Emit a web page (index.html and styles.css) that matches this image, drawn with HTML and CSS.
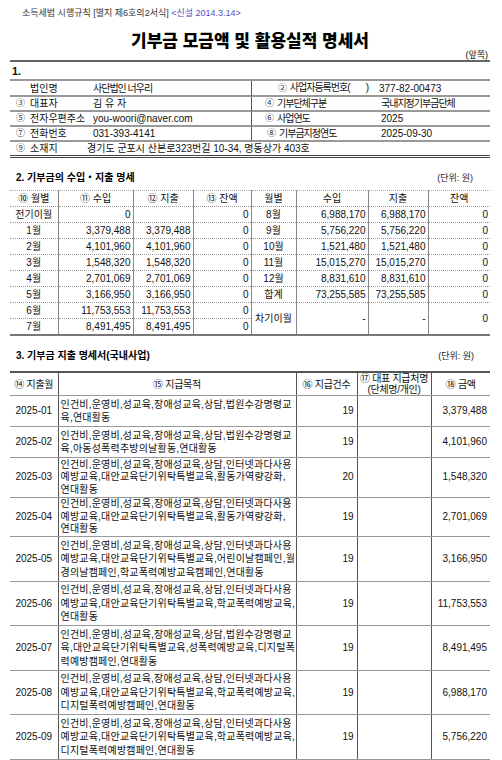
FILE: index.html
```html
<!DOCTYPE html>
<html lang="ko">

<head>
    <meta charset="UTF-8">
    <meta name="viewport" content="width=device-width, initial-scale=1.0">
    <title>기부금 모금액 및 활용실적 명세서</title>
    <link rel="stylesheet" href="styles.css">
</head>

<body>
    <div class="page">
        <p class="form-ref">소득세법 시행규칙 [별지 제6호의2서식] <span class="revised">&lt;신설 2014.3.14&gt;</span></p>
        <h1>기부금 모금액 및 활용실적 명세서</h1>
        <p class="side-note">(앞쪽)</p>

        <!-- 1. 기본사항 -->
        <div class="section-one">
            <div class="sec-no">1.</div>
            <table class="info-table">
                <colgroup>
                    <col style="width:18px">
                    <col style="width:59px">
                    <col style="width:164px">
                    <col style="width:26px">
                    <col style="width:98px">
                    <col style="width:115px">
                </colgroup>
                <tr>
                    <td class="no"></td>
                    <td>법인명</td>
                    <td class="value kr">사단법인 너우리</td>
                    <td class="no mid"></td>
                    <td class="label reg">
                        <div class="split"><span><span class="circ">②</span> <span class="kr">사업자등록번호(</span></span><span>)</span></div>
                    </td>
                    <td class="value shift">377-82-00473</td>
                </tr>
                <tr>
                    <td class="no">③</td>
                    <td>대표자</td>
                    <td class="value">김 유 자</td>
                    <td class="no mid">④</td>
                    <td class="label kr">기부단체구분</td>
                    <td class="value kr">국내지정기부금단체</td>
                </tr>
                <tr>
                    <td class="no">⑤</td>
                    <td>전자우편주소</td>
                    <td class="value">you-woori@naver.com</td>
                    <td class="no mid">⑥</td>
                    <td class="label kr">사업연도</td>
                    <td class="value">2025</td>
                </tr>
                <tr>
                    <td class="no">⑦</td>
                    <td>전화번호</td>
                    <td class="value">031-393-4141</td>
                    <td class="no mid nudge">⑧</td>
                    <td class="label kr nudge">기부금지정연도</td>
                    <td class="value">2025-09-30</td>
                </tr>
                <tr class="last">
                    <td class="no">⑨</td>
                    <td>소재지</td>
                    <td class="value addr" colspan="4">경기도 군포시 산본로323번길 10-34, 명동상가 403호</td>
                </tr>
            </table>
        </div>

        <!-- 2. 수입·지출 -->
        <div class="sec-head">
            <h2>2. 기부금의 수입・지출 명세</h2>
            <span class="unit">(단위: 원)</span>
        </div>
        <table class="flow-table">
            <colgroup>
                <col style="width:48px">
                <col style="width:75px">
                <col style="width:60px">
                <col style="width:58px">
                <col style="width:45px">
                <col style="width:72px">
                <col style="width:60px">
                <col style="width:62px">
            </colgroup>
            <thead>
                <tr>
                    <th>⑩ 월별</th>
                    <th>⑪ 수입</th>
                    <th>⑫ 지출</th>
                    <th>⑬ 잔액</th>
                    <th>월별</th>
                    <th>수입</th>
                    <th>지출</th>
                    <th>잔액</th>
                </tr>
            </thead>
            <tbody>
                <tr>
                    <td class="month">전기이월</td>
                    <td>0</td>
                    <td></td>
                    <td>0</td>
                    <td class="month">8월</td>
                    <td>6,988,170</td>
                    <td>6,988,170</td>
                    <td>0</td>
                </tr>
                <tr>
                    <td class="month">1월</td>
                    <td>3,379,488</td>
                    <td>3,379,488</td>
                    <td>0</td>
                    <td class="month">9월</td>
                    <td>5,756,220</td>
                    <td>5,756,220</td>
                    <td>0</td>
                </tr>
                <tr>
                    <td class="month">2월</td>
                    <td>4,101,960</td>
                    <td>4,101,960</td>
                    <td>0</td>
                    <td class="month">10월</td>
                    <td>1,521,480</td>
                    <td>1,521,480</td>
                    <td>0</td>
                </tr>
                <tr>
                    <td class="month">3월</td>
                    <td>1,548,320</td>
                    <td>1,548,320</td>
                    <td>0</td>
                    <td class="month">11월</td>
                    <td>15,015,270</td>
                    <td>15,015,270</td>
                    <td>0</td>
                </tr>
                <tr>
                    <td class="month">4월</td>
                    <td>2,701,069</td>
                    <td>2,701,069</td>
                    <td>0</td>
                    <td class="month">12월</td>
                    <td>8,831,610</td>
                    <td>8,831,610</td>
                    <td>0</td>
                </tr>
                <tr>
                    <td class="month">5월</td>
                    <td>3,166,950</td>
                    <td>3,166,950</td>
                    <td>0</td>
                    <td class="month">합계</td>
                    <td>73,255,585</td>
                    <td>73,255,585</td>
                    <td>0</td>
                </tr>
                <tr>
                    <td class="month">6월</td>
                    <td>11,753,553</td>
                    <td>11,753,553</td>
                    <td>0</td>
                    <td class="month" rowspan="2">차기이월</td>
                    <td rowspan="2">-</td>
                    <td rowspan="2">-</td>
                    <td rowspan="2">0</td>
                </tr>
                <tr>
                    <td class="month">7월</td>
                    <td>8,491,495</td>
                    <td>8,491,495</td>
                    <td>0</td>
                </tr>
            </tbody>
        </table>

        <!-- 3. 지출 명세 -->
        <div class="sec-head sec-three">
            <h2>3. 기부금 지출 명세서(국내사업)</h2>
            <span class="unit unit-wide">(단위: 원)</span>
        </div>
        <table class="spend-table">
            <colgroup>
                <col style="width:48px">
                <col style="width:238px">
                <col style="width:61px">
                <col style="width:74px">
                <col style="width:59px">
            </colgroup>
            <thead>
                <tr>
                    <th>⑭ 지출월</th>
                    <th>⑮ 지급목적</th>
                    <th>⑯ 지급건수</th>
                    <th>⑰ 대표 지급처명<br>(단체명/개인)</th>
                    <th>⑱ 금액</th>
                </tr>
            </thead>
            <tbody>
                <tr>
                    <td class="month">2025-01</td>
                    <td class="purpose">인건비,운영비,성교육,장애성교육,상담,법원수강명령교<br>육,연대활동</td>
                    <td class="num">19</td>
                    <td></td>
                    <td class="num">3,379,488</td>
                </tr>
                <tr>
                    <td class="month">2025-02</td>
                    <td class="purpose">인건비,운영비,성교육,장애성교육,상담,법원수강명령교<br>육,아동성폭력추방의날활동,연대활동</td>
                    <td class="num">19</td>
                    <td></td>
                    <td class="num">4,101,960</td>
                </tr>
                <tr class="tight">
                    <td class="month">2025-03</td>
                    <td class="purpose">인건비,운영비,성교육,장애성교육,상담,인터넷과다사용<br>예방교육,대안교육단기위탁특별교육,활동가역량강화,<br>연대활동</td>
                    <td class="num">20</td>
                    <td></td>
                    <td class="num">1,548,320</td>
                </tr>
                <tr class="tight">
                    <td class="month">2025-04</td>
                    <td class="purpose">인건비,운영비,성교육,장애성교육,상담,인터넷과다사용<br>예방교육,대안교육단기위탁특별교육,활동가역량강화,<br>연대활동</td>
                    <td class="num">19</td>
                    <td></td>
                    <td class="num">2,701,069</td>
                </tr>
                <tr>
                    <td class="month">2025-05</td>
                    <td class="purpose">인건비,운영비,성교육,장애성교육,상담,인터넷과다사용<br>예방교육,대안교육단기위탁특별교육,어린이날캠페인,월<br>경의날캠페인,학교폭력예방교육캠페인,연대활동</td>
                    <td class="num">19</td>
                    <td></td>
                    <td class="num">3,166,950</td>
                </tr>
                <tr>
                    <td class="month">2025-06</td>
                    <td class="purpose">인건비,운영비,성교육,장애성교육,상담,인터넷과다사용<br>예방교육,대안교육단기위탁특별교육,학교폭력예방교육,<br>연대활동</td>
                    <td class="num">19</td>
                    <td></td>
                    <td class="num">11,753,553</td>
                </tr>
                <tr>
                    <td class="month">2025-07</td>
                    <td class="purpose">인건비,운영비,성교육,장애성교육,상담,법원수강명령교<br>육,대안교육단기위탁특별교육,성폭력예방교육,디지털폭<br>력예방캠페인,연대활동</td>
                    <td class="num">19</td>
                    <td></td>
                    <td class="num">8,491,495</td>
                </tr>
                <tr>
                    <td class="month">2025-08</td>
                    <td class="purpose">인건비,운영비,성교육,장애성교육,상담,인터넷과다사용<br>예방교육,대안교육단기위탁특별교육,학교폭력예방교육,<br>디지털폭력예방캠페인,연대활동</td>
                    <td class="num">19</td>
                    <td></td>
                    <td class="num">6,988,170</td>
                </tr>
                <tr>
                    <td class="month">2025-09</td>
                    <td class="purpose">인건비,운영비,성교육,장애성교육,상담,인터넷과다사용<br>예방교육,대안교육단기위탁특별교육,학교폭력예방교육,<br>디지털폭력예방캠페인,연대활동</td>
                    <td class="num">19</td>
                    <td></td>
                    <td class="num">5,756,220</td>
                </tr>
            </tbody>
        </table>
    </div>
</body>

</html>
```

FILE: styles.css
```css
body {
    margin: 0;
    font-family: "Liberation Sans", "Noto Sans CJK KR", sans-serif;
    font-size: 10px;
    color: #111;
    background: #fff;
}

.page {
    width: 480px;
    padding: 0 12px 0 10px;
}

.form-ref {
    margin: 0;
    padding: 8px 0 0 12px;
    font-size: 9px;
    line-height: 11px;
    color: #333;
}

.revised {
    color: #5b4bc4;
}

h1 {
    margin: 11px 0 0;
    font-family: "Noto Sans CJK KR", sans-serif;
    font-size: 17px;
    line-height: 20px;
    font-weight: 900;
    text-align: center;
    color: #000;
}

.side-note {
    margin: 0;
    padding-right: 2px;
    font-size: 9px;
    line-height: 10px;
    text-align: right;
}

/* section 1 */
.section-one {
    border-top: 2px solid #666;
}

.sec-no {
    height: 17px;
    line-height: 18px;
    padding-left: 2px;
    font-size: 11px;
    font-weight: bold;
}

.info-table {
    width: 100%;
    table-layout: fixed;
    border-collapse: separate;
    border-spacing: 0;
    border-top: 2px solid #999;
}

.info-table td {
    padding: 0 0 0 6px;
    line-height: 13px;
    border-bottom: 2px solid #999;
    white-space: nowrap;
    overflow: hidden;
}

.info-table .last td {
    border-bottom: 3px double #444;
}

.info-table td.no {
    padding-left: 6px;
    font-size: 9px;
    color: #333;
}

.circ {
    font-size: 9px;
    color: #333;
}

.info-table td:nth-child(2) {
    padding-left: 2px;
}

.info-table td.mid {
    padding-left: 13px;
    border-left: 1px solid #555;
}

.info-table td.label {
    padding-left: 0;
}

.info-table td.label.reg {
    padding-left: 1px;
}

.info-table td.value {
    padding-left: 6px;
}

.info-table td.value.shift {
    padding-left: 4px;
}

.info-table td.nudge {
    padding-left: 2px;
}

.info-table td.mid.nudge {
    padding-left: 15px;
}

.info-table td.value.addr {
    padding-left: 0;
}

.kr {
    letter-spacing: -1px;
}

.split {
    display: flex;
    justify-content: space-between;
    padding-right: 6px;
}

/* section headers */
.sec-head {
    display: flex;
    justify-content: space-between;
    align-items: center;
    padding-top: 13px;
    margin-bottom: 5px;
    line-height: 14px;
}

.sec-head h2 {
    margin: 0;
    padding-left: 6px;
    font-size: 10px;
    font-weight: bold;
    color: #000;
}

.unit {
    padding-right: 17px;
    font-size: 9px;
    color: #222;
}

.sec-three {
    margin-bottom: 8px;
}

.unit-wide {
    padding-right: 16px;
}

/* section 2 */
.flow-table {
    width: 100%;
    table-layout: fixed;
    border-collapse: collapse;
    border-top: 1px dotted #aaa;
    border-bottom: 2px solid #777;
}

.flow-table th,
.flow-table td {
    padding: 0 2px;
    line-height: 15px;
    border-bottom: 1px dotted #999;
    border-left: 1px solid #888;
    text-align: right;
    white-space: nowrap;
}

.flow-table th {
    font-weight: normal;
    text-align: center;
}

.flow-table th:first-child,
.flow-table tr td:first-child {
    border-left: none;
}

.flow-table td.month {
    text-align: center;
}

/* section 3 */
.spend-table {
    width: 100%;
    table-layout: fixed;
    border-collapse: collapse;
    border-top: 2px solid #555;
}

.spend-table th,
.spend-table td {
    padding: 1.5px 3px;
    line-height: 13.5px;
    border-bottom: 1px solid #999;
    border-left: 1px solid #555;
    vertical-align: middle;
}

.spend-table th:first-child,
.spend-table td:first-child {
    border-left: none;
}

.spend-table th {
    padding: 0;
    font-size: 10px;
    font-weight: normal;
    line-height: 11px;
    text-align: center;
    white-space: nowrap;
    letter-spacing: -0.3px;
}

.spend-table td.month {
    padding: 0;
    text-align: center;
}

.spend-table td.purpose {
    padding-left: 2px;
    padding-right: 0;
    text-align: left;
    white-space: nowrap;
    letter-spacing: 0.2px;
}

.spend-table td.num {
    text-align: right;
}

.spend-table .tight td {
    padding-top: 0.5px;
    padding-bottom: 0.5px;
    line-height: 12.5px;
}
```
